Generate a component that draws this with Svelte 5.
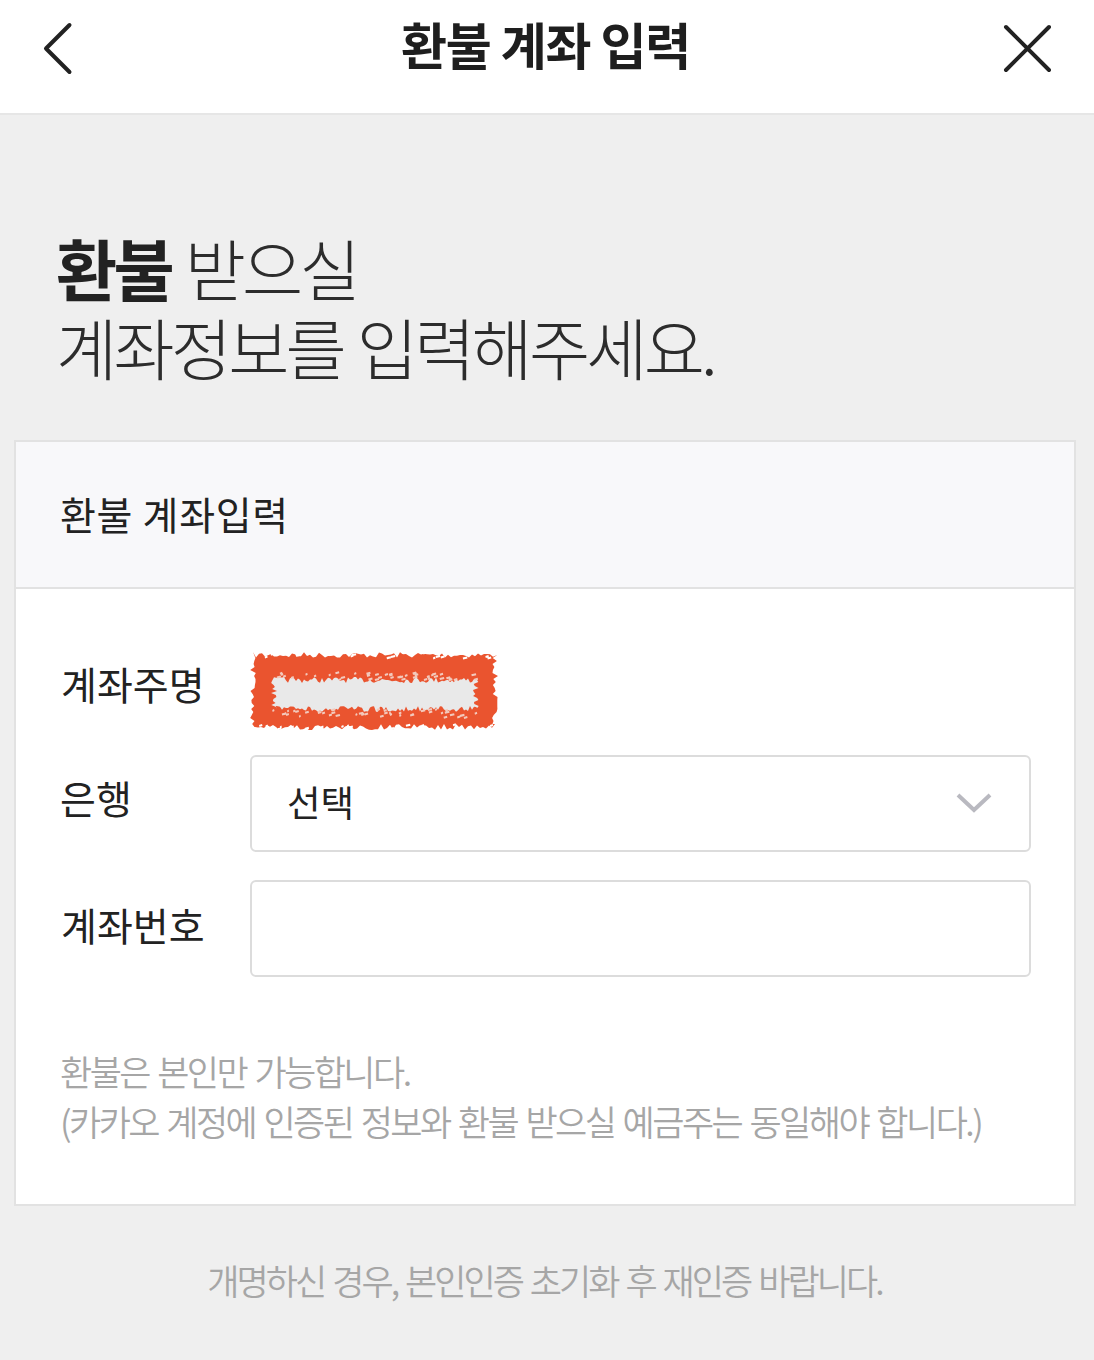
<script>
	// rough marker scribble over the account holder name
	let seed = 7;
	const rnd = () => {
		seed = (seed * 16807) % 2147483647;
		return seed / 2147483647 - 0.5;
	};

	function jagged(x0, y0, x1, y1, step, amp) {
		const pts = [];
		for (let x = x0; x < x1; x += step) pts.push([x, y0 + rnd() * amp]);
		for (let y = y0; y < y1; y += step) pts.push([x1 + rnd() * amp, y]);
		for (let x = x1; x > x0; x -= step) pts.push([x, y1 + rnd() * amp]);
		for (let y = y1; y > y0; y -= step) pts.push([x0 + rnd() * amp, y]);
		return 'M' + pts.map((p) => p[0].toFixed(1) + ' ' + p[1].toFixed(1)).join('L') + 'Z';
	}

	function specks(x0, y0, x1, y1, count) {
		let d = '';
		for (let i = 0; i < count; i++) {
			const x = x0 + (rnd() + 0.5) * (x1 - x0);
			const y = y0 + (rnd() + 0.5) * (y1 - y0);
			const w = 1.5 + (rnd() + 0.5) * 3;
			d += `M${x.toFixed(1)} ${y.toFixed(1)}l${w.toFixed(1)} -1l0.5 2l-${w.toFixed(1)} 1Z`;
		}
		return d;
	}

	const outer = jagged(5, 5, 247, 77, 3, 6);
	const inner = jagged(26, 30, 228, 59, 2, 6);
	const flecks = specks(24, 22, 230, 30, 45) + specks(24, 59, 230, 67, 45);
	const edge = specks(3, 2, 249, 8, 20) + specks(3, 74, 249, 80, 20);
</script>

<div class="page">
	<header class="topbar">
		<button type="button" class="icon-btn" aria-label="back">
			<svg width="32" height="56" viewBox="0 0 32 56">
				<path d="M27.5 6 L4 29.5 L27.5 53" />
			</svg>
		</button>
		<h1>환불 계좌 입력</h1>
		<button type="button" class="icon-btn close" aria-label="close">
			<svg width="52" height="52" viewBox="0 0 52 52">
				<path d="M5 6 L48 49 M48 6 L5 49" />
			</svg>
		</button>
	</header>

	<section class="intro">
		<p><strong>환불</strong> 받으실</p>
		<p>계좌정보를 입력해주세요.</p>
	</section>

	<section class="card">
		<div class="card-title">환불 계좌입력</div>
		<div class="card-body">
			<div class="row name-row">
				<span class="label">계좌주명</span>
				<svg class="scribble" width="250" height="84" viewBox="0 0 250 84">
					<path d={outer} fill="#ea542f" />
					<path d={inner} fill="#e9e9e9" />
					<path d={flecks} fill="#f3c9bc" />
					<path d={edge} fill="#fff" />
				</svg>
			</div>
			<div class="row bank-row">
				<span class="label up">은행</span>
				<div class="field select">
					<span>선택</span>
					<svg width="36" height="22" viewBox="0 0 36 22">
						<path d="M2 3 L18 18 L34 3" />
					</svg>
				</div>
			</div>
			<div class="row account-row">
				<span class="label">계좌번호</span>
				<div class="field"></div>
			</div>
			<div class="notice">
				<p>환불은 본인만 가능합니다.</p>
				<p>(카카오 계정에 인증된 정보와 환불 받으실 예금주는 동일해야 합니다.)</p>
			</div>
		</div>
	</section>

	<p class="footnote">개명하신 경우, 본인인증 초기화 후 재인증 바랍니다.</p>
</div>

<style>
	:global(body) {
		margin: 0;
		background: #efefef;
	}

	.page {
		width: 1094px;
		height: 1360px;
		overflow: hidden;
		background: #efefef;
		font-family: 'Noto Sans CJK KR', 'Noto Sans', sans-serif;
		color: #222;
	}

	.topbar {
		height: 115px;
		box-sizing: border-box;
		display: grid;
		grid-template-columns: 1fr auto 1fr;
		align-items: center;
		padding: 0 41px 19px 42px;
		background: #fff;
		border-bottom: 2px solid #e6e6e6;
	}

	.topbar h1 {
		margin: -8px 4px 0 0;
		font-size: 50px;
		font-weight: 700;
		letter-spacing: -1.2px;
		line-height: 60px;
		color: #1e1e1e;
	}

	.icon-btn {
		background: none;
		border: none;
		padding: 0;
		display: flex;
	}

	.icon-btn.close {
		justify-self: end;
	}

	.icon-btn path {
		fill: none;
		stroke: #222;
		stroke-width: 4;
		stroke-linecap: round;
		stroke-linejoin: round;
	}

	.intro {
		padding: 113px 0 0 56px;
		height: 212px;
		font-size: 66.5px;
		font-weight: 300;
		letter-spacing: -3.8px;
		word-spacing: 3px;
		line-height: 79px;
		color: #2c2c2c;
	}

	.intro p {
		margin: 0;
	}

	.intro strong {
		font-weight: 700;
		color: #222;
	}

	.card {
		margin: 0 18px 0 14px;
		border: 2px solid #e2e2e2;
		background: #fff;
		height: 766px;
		box-sizing: border-box;
	}

	.card-title {
		height: 147px;
		box-sizing: border-box;
		padding: 0 0 4px 44px;
		display: flex;
		align-items: center;
		background: #f8f8fa;
		border-bottom: 2px solid #e2e2e2;
		font-size: 39px;
		letter-spacing: 0.7px;
		color: #222;
	}

	.card-body {
		padding: 0 43px 0 45px;
	}

	.row {
		display: flex;
		align-items: center;
	}

	.label {
		width: 189px;
		flex: none;
		font-size: 39px;
		color: #222;
	}

	.name-row {
		height: 166px;
	}

	.name-row .label {
		margin-top: 21px;
	}

	.scribble {
		margin-top: 40px;
		margin-left: -2px;
	}

	.bank-row {
		height: 97px;
	}

	.up {
		margin-top: -14px;
		margin-left: -1px;
		width: 190px;
	}

	.account-row {
		height: 97px;
		margin-top: 28px;
	}

	.account-row .label {
		margin-top: -10px;
	}

	.field {
		flex: 1;
		height: 97px;
		box-sizing: border-box;
		border: 2px solid #dcdcdc;
		border-radius: 6px;
		background: #fff;
	}

	.select {
		display: flex;
		align-items: center;
		justify-content: space-between;
		padding: 0 37px 4px 35px;
		font-size: 36.5px;
		color: #222;
	}

	.select svg {
		margin-top: 2px;
	}

	.select path {
		fill: none;
		stroke: #b9b9c0;
		stroke-width: 4;
	}

	.notice {
		margin: 69px 0 0 -1px;
		font-size: 35px;
		font-weight: 350;
		letter-spacing: -2.55px;
		word-spacing: 3px;
		line-height: 50px;
		color: #a6a6a6;
	}

	.notice p {
		margin: 0;
	}

	.footnote {
		margin: 49px 0 0;
		padding-right: 5px;
		text-align: center;
		font-size: 35px;
		font-weight: 350;
		letter-spacing: -2.95px;
		word-spacing: 3px;
		line-height: 50px;
		color: #a6a6a6;
	}
</style>
